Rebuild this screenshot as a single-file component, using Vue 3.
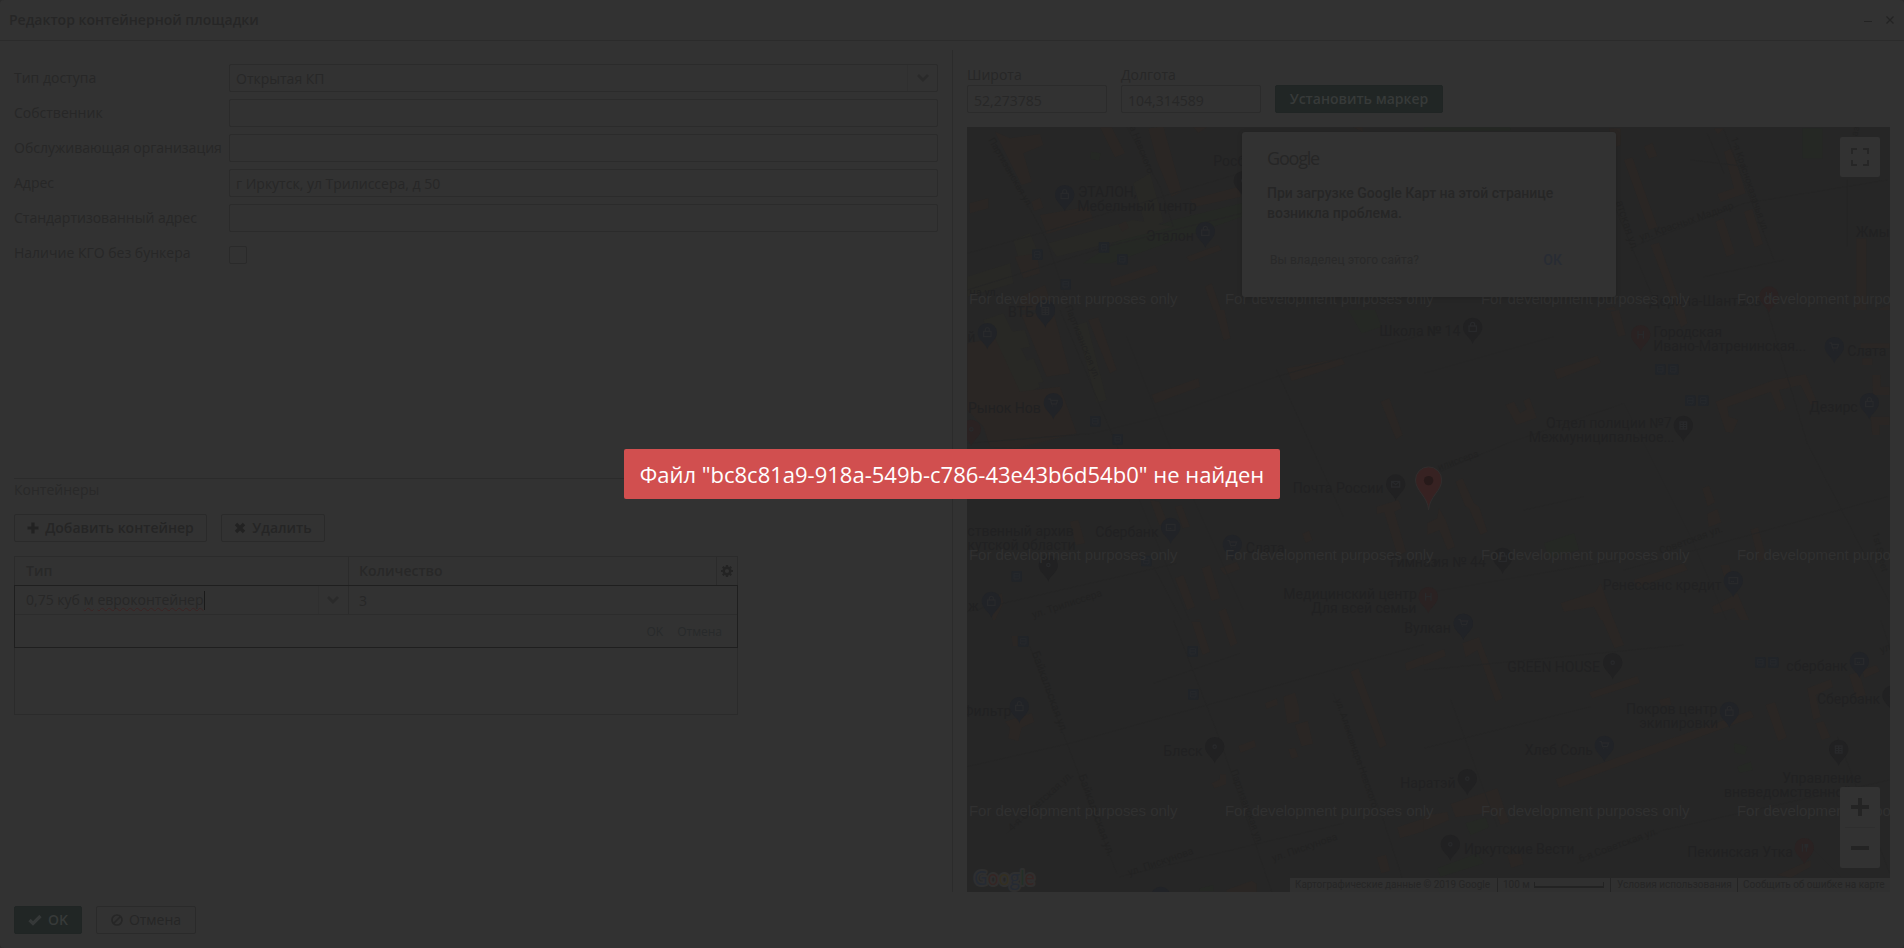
<script setup>
const fields = [
  { label: 'Тип доступа', value: 'Открытая КП', combo: true },
  { label: 'Собственник', value: '' },
  { label: 'Обслуживающая организация', value: '' },
  { label: 'Адрес', value: 'г Иркутск, ул Трилиссера, д 50' },
  { label: 'Стандартизованный адрес', value: '' },
]

// The map is made of sectors; drawing units inside one are a third of a pixel.
const sectors = [
  {
    ox: 960, oy: 0,
    green: 'M640 660L845 610V650L450 790L370 790L460 730ZM392 455l30 5-5 22-26-6Z',
    yellow: 'M520 550L570 520L610 665L560 690ZM265 730L520 660L640 680L290 770ZM22 830L150 790L160 850L22 890ZM160 720l50-20 25 60-60 15Z',
    orange: 'M105 395L150 415L240 402L250 435L190 460L215 545L185 555ZM28 610L85 595V625L30 640ZM215 605l25-12 10 30-28 10ZM240 645L385 620L400 660L260 702ZM420 382L455 382L495 460L465 472ZM565 385L610 380L665 575L635 590L590 480ZM690 600L835 560L843 590L705 620ZM680 770L775 735L785 750L690 785ZM450 840L585 795L595 815L455 860ZM735 860L755 850L790 950L770 960ZM165 770l65-10 10 60-50 15ZM180 890l75-35 30 90-110 15ZM700 382h40l-25 16ZM1180 382h28v14ZM475 675l22-12 10 20-20 12Z',
    roads: 'M105 430L260 720L420 1200M500 380L600 560L640 680M22 760L240 700L840 520M22 870L440 740L845 640',
    pins: [[314, 584, 'b', 'bag'], [736, 694, 'b', 'bag'], [256, 928, 'b', 'grid'], [850, 542, 'd', 'dot']],
    stops: [[232, 764], [432, 742], [487, 778], [317, 853]],
    labels: [[354, 590, 'ЭТАЛОН,', 42], [352, 632, 'Мебельный центр', 42], [558, 722, 'Эталон', 42], [760, 497, 'Росб', 42], [144, 952, 'ВТБ', 42], [28, 888, 'на ул.', 33]],
    streets: [[85, 420, 60, 'Партизанская ул.', 29], [508, 382, 68, 'а Невского', 29], [315, 920, 68, 'Партизанская ул.', 29]],
  },
  {
    ox: 1424, oy: 0,
    green: 'M1135 385h60v90h-60ZM0 382h260v10H0Z',
    yellow: '',
    orange: 'M600 480L625 472L700 680L675 690ZM555 385l35 0 0 50-20 8ZM660 440l25-12 15 40-25 8ZM900 455L925 445L965 580L890 605L880 582L930 565ZM870 385h30l-18 18ZM960 635l25-8 32 105-25 10ZM875 665l23-10 35 105-25 10ZM680 735L705 728L785 955L765 960ZM1297 715h30v215h-30ZM545 925l25-5 30 60-28 12ZM1365 925l32-10v35h-25Z',
    roads: 'M560 590L690 900M900 390L1050 780M640 735L960 610L1390 540M850 400l50 120M1270 540v200M800 480l170 20M840 830l240-50',
    pins: [[1035, 888, 'r', 'h']],
    stops: [],
    labels: [[1295, 711, 'Жмы', 42], [675, 918, 'Дерина-Шанталь', 42]],
    streets: [[575, 605, 72, 'атская ул.', 34], [650, 722, -19, 'ул. Красных Мадьяр', 31], [920, 415, 71, '1-я Красноказачья ул.', 29], [1300, 410, -78, 'азачья', 28]],
  },
  {
    ox: 960, oy: 310,
    green: 'M1165 0h80l20 50-60 20Z',
    yellow: 'M70 30L130 10L240 230L180 260ZM150 65l45-5 15 50-50 10ZM170 165l50-20 30 70-55 15ZM350 45l30-10 60 235-30 8Z',
    orange: 'M22 100L105 85L180 245L300 230L350 370L170 415L90 410L70 350L22 300ZM185 15L280 5L330 190L260 200ZM385 30L415 22L470 180L450 190ZM575 255L715 205L720 230L585 280ZM980 175L1145 145L1155 162L995 213ZM1262 275L1288 265L1328 375L1308 388ZM765 0h28l18 85-20 6ZM570 570l28 5 28 75-28-5ZM645 590l20-5 25 65-22 5ZM330 635l25-5 20 70-28 5ZM1250 590l65-20 10 25-22 10 35 120-25 12-40-130-22 5ZM1400 640l40-15v40l-35 5ZM1027 672l20-10 10 28-20 8ZM645 805l25-10 35 95-23 10ZM725 775l25-10 30 100-25 8ZM780 775l50-20 10 22-45 18ZM775 905l22-10 25 70h-25ZM695 935l22-8 25 33h-30ZM90 870l35-20 5 30-30 60Z',
    roads: 'M300 0L480 430L700 960M22 400L400 370L640 310M500 80L630 410L850 900M640 310L950 200L1440 60M580 770L680 960M0 910L650 760M950 180L1150 620',
    pins: [[82, 68, 'b', 'bag'], [256, 3, 'b', 'grid'], [280, 278, 'b', 'cart'], [34, 358, 'r', 'dot'], [1307, 522, 'd', 'mail'], [632, 652, 'b', 'card'], [817, 703, 'b', 'cart'], [265, 765, 'd', 'dot'], [94, 874, 'b', 'bag'], [1405, 860, 'r', 'h']],
    stops: [[406, 334], [473, 388], [559, 753], [170, 799]],
    labels: [[22, 96, 'й', 42], [24, 308, 'Рынок Нов', 42], [1258, 78, 'Школа №', 42], [998, 550, 'Почта России', 42], [22, 678, 'ственный архив', 42], [22, 720, 'кутской области', 42], [406, 682, 'Сбербанк', 42], [857, 730, 'Слата', 42], [1290, 772, 'Гимназ', 42], [970, 867, 'Медицинский центр', 42], [1054, 909, 'Для всей семьи', 42], [24, 903, 'ж', 42]],
    streets: [[220, 925, -18, 'ул. Трилиссера', 31]],
  },
  {
    ox: 1424, oy: 310,
    green: 'M360 700l90-30 15 50-90 25Z',
    yellow: '',
    orange: 'M390 180L520 137L530 158L400 208ZM245 285l25-10 18 35 20-12-10-25 18-10 22 60-60 22ZM875 275L1050 210L1145 193L1180 280L1160 285L1130 225L1065 240L1085 295L1065 305L1040 245L910 290L915 320L942 330L925 368L905 365ZM560 5l25-5 20 75-22 5ZM750 0h30l10 40-18 12ZM95 515l20-10 35 75 15 10 25 75-20 10-35-80-12-8ZM10 640l30-15 5-30 20 35 28 80-22 10-25-60-36 15ZM835 535l20-8 18 50-22 12ZM850 612l30-15 12 40-38 15ZM980 660l22-8 25 90-22 15ZM410 880L515 845L530 820L580 960H545L510 890L420 905ZM630 810L780 760L790 780L640 830ZM865 890L940 850L975 930L955 940L930 895L870 912ZM1345 195h25v35h27v25h-50ZM1310 100h87v15h-87ZM1315 145h30v20h-30ZM1340 320h57v25h-30v30h-22ZM890 765h25l8 25-22 10Z',
    roads: 'M0 505L250 400L600 280M600 780L1390 560M600 280L800 680L920 960M0 850L700 730M1030 0L1150 400L1397 880M0 190L390 80M300 600L480 560',
    pins: [[146, 52, 'd', 'bag'], [650, 74, 'r', 'h'], [1231, 110, 'b', 'cart'], [1336, 278, 'b', 'bag'], [778, 346, 'd', 'grid'], [236, 742, 'd', 'bag'], [928, 812, 'b', 'card'], [118, 940, 'b', 'cart']],
    stops: [[709, 178], [748, 178], [799, 272], [838, 272]],
    labels: [[8, 77, '№ 14', 42], [688, 81, 'Городская', 42], [688, 123, 'Ивано-Матренинская...', 42], [1270, 138, 'Слата', 42], [1156, 306, 'Дезирс', 42], [366, 354, 'Отдел полиции №7', 42], [314, 397, 'Межмуниципальное...', 42], [27, 771, 'ия № 44', 42], [536, 840, 'Ренессанс кредит', 42]],
    streets: [[45, 482, -20, 'илиссера', 29], [710, 733, -20, 'Советская ул.', 31], [1345, 670, 76, '1st Street', 28]],
  },
  {
    ox: 960, oy: 620,
    green: 'M720 805l40-10v18h-40Z',
    yellow: '',
    orange: 'M695 5h25l30 90-22 10ZM785 0h25l22 70-20 10ZM155 48h18v30h-14ZM135 305l80-25 8 25-38 18-10 40-30-8 5-32ZM1335 130L1440 90V115L1340 152ZM1172 155L1195 145L1280 375L1260 385ZM970 230l35-12 12 45 0 40-35 8ZM1005 315l38-12 16 68-34 8ZM915 250l35-14 4 18-34 12ZM835 378l48-18 5 20-46 18ZM985 388l20-4 10 26-20 6ZM755 490l25-12 0-15 18 0 0 30-35 12ZM1312 622L1440 580V620L1320 655ZM1250 712l28-8 12 48-26 8ZM800 810l75-28 15 10v24h-90Z',
    roads: 'M640 0L780 360L935 815M210 80L470 760M22 440L330 370L1440 60M140 640L340 470M480 770L1150 610M580 190l260-90M1120 220L1270 600L1340 815',
    pins: [[178, 260, 'b', 'bag'], [764, 380, 'd', 'dot'], [602, 829, 'b', 'dot']],
    stops: [[190, 64], [698, 94], [700, 223]],
    labels: [[8, 287, 'Фильтр', 42], [610, 408, 'Блеск', 42], [1333, 39, 'Вулкан', 42], [1321, 504, 'Наратэй', 42]],
    streets: [[215, 98, 70, 'Байкальская ул.', 34], [355, 467, 70, 'Байкальская ул.', 34], [155, 635, -42, '4-я Советская ул.', 31], [508, 768, -19, 'ул. Пискунова', 31], [940, 725, -19, 'ул. Пискунова', 31], [812, 452, 70, 'Партизанская ул.', 29], [1125, 240, 71, 'ул. Александра Невского', 29]],
  },
  {
    ox: 1424, oy: 620,
    green: 'M125 610l60-18 10 30-55 24ZM40 745L160 700L180 730L50 770ZM930 370l40 10-8 25-30-8ZM940 440l40-15 6 25-40 8Z',
    yellow: '',
    orange: 'M115 70L165 52L235 235L215 245L160 90L125 112ZM535 0h35l30 75-28 10ZM0 110L60 88L65 108L0 135ZM495 218L640 168L648 188L505 235ZM395 478L980 272L990 292L405 503ZM1025 255l28-8 35 105-25 12ZM1150 205L1220 178L1227 200L1175 225L1190 290L1168 300ZM1175 310l24-6 20 48-26 8ZM1275 165l30-10 20 70-28 8ZM1315 150l42-14 10 18-46 20ZM705 240l32-8 5 22-30 4ZM80 552L220 505L255 605L230 615L215 575L95 592ZM0 588L70 576L75 600L0 632ZM250 705l40-5 8 32-36 12ZM1060 765L1160 720V740L1100 773Z',
    roads: 'M0 150L780 75M460 730L720 630L1397 480M0 385L500 260M1370 0L1397 80M1240 350L1397 760M80 240l140 380M1150 670l100 100',
    pins: [[118, 10, 'b', 'cart'], [566, 128, 'd', 'dot'], [1306, 124, 'b', 'card'], [916, 274, 'b', 'bag'], [541, 376, 'b', 'cart'], [1244, 388, 'd', 'grid'], [130, 476, 'd', 'dot'], [79, 673, 'd', 'dot'], [1141, 683, 'r', 'fork'], [1404, 226, 'd', 'dot']],
    stops: [[1009, 127], [1048, 127]],
    labels: [[250, 156, 'GREEN HOUSE', 42], [1087, 153, 'сбербанк', 42], [1179, 252, 'Сбербанк', 42], [606, 283, 'Покров центр', 42], [646, 325, 'экипировки', 42], [302, 405, 'Хлеб Соль', 42], [1075, 489, 'Управление', 42], [900, 531, 'вневедомственной', 42], [120, 702, 'Иркутские Вести', 42], [790, 711, 'Пекинская Утка', 42]],
    streets: [[468, 727, -20, '6-я Советская ул.', 31], [1372, 100, -20, 'ул.', 31]],
  },
]
const glyphs = {
  bag: 'M-11 -4H11V12H-11ZM-6 -5V-9A6 6 0 0 1 6 -9V-5',
  cart: 'M-15 -11H-9L-5 4H9L13 -7H-8M-4 10h2M7 10h2',
  grid: 'M-10 -10H10V11H-10ZM-10 -3H10M-10 4H10M0 -10V11',
  mail: 'M-12 -8H12V9H-12ZL0 2L12 -8',
  card: 'M-13 -9H13V9H-13ZM-7 3h4M-2 3h4',
  h: 'M-8 -12V12M8 -12V12M-8 0H8',
  fork: 'M-6 -11V12M6 -11V12M2 -11V-2H10V-11',
  dot: 'M-5 0A5 5 0 1 0 5 0A5 5 0 1 0 -5 0',
}
const watermarks = []
for (const y of [304, 560, 816]) for (let i = 0; i < 4; i++) watermarks.push([969 + i * 256, y])
</script>

<template>
  <div class="window">
    <header class="titlebar">
      <h1>Редактор контейнерной площадки</h1>
      <div class="tools">
        <svg width="8" height="12" viewBox="0 0 8 12"><path d="M0 7.5H8" /></svg>
        <svg width="8" height="12" viewBox="0 0 8 12"><path d="M.5 2.5L7.5 9.5M7.5 2.5L.5 9.5" /></svg>
      </div>
    </header>

    <main class="body">
      <section class="left">
        <div class="form">
          <div v-for="f in fields" :key="f.label" class="row">
            <label>{{ f.label }}</label>
            <div class="input">
              <span>{{ f.value }}</span>
              <i v-if="f.combo" class="trigger">
                <svg width="14" height="10" viewBox="0 0 14 10"><path d="M2 2L7 7L12 2" /></svg>
              </i>
            </div>
          </div>
          <div class="row">
            <label>Наличие КГО без бункера</label>
            <div class="check"></div>
          </div>
        </div>

        <div class="containers">
          <div class="caption">Контейнеры</div>
          <div class="toolbar">
            <div class="btn add">
              <svg width="12" height="12" viewBox="0 0 12 12"><path d="M6 .5V11.5M.5 6H11.5" stroke-width="3.2" /></svg>
              <span>Добавить контейнер</span>
            </div>
            <div class="btn del">
              <svg width="12" height="12" viewBox="0 0 12 12"><path d="M2 2L10 10M10 2L2 10" stroke-width="3.4" /></svg>
              <span>Удалить</span>
            </div>
          </div>
          <div class="grid">
            <div class="ghead">
              <div class="c1">Тип</div>
              <div class="c2">Количество</div>
              <div class="c3">
                <svg width="12" height="12" viewBox="-6 -6 12 12">
                  <circle r="3.3" stroke-width="2.4" />
                  <path d="M0 -6V-4M0 6V4M-6 0H-4M6 0H4M-4.2 -4.2L-3 -3M4.2 4.2L3 3M-4.2 4.2L-3 3M4.2 -4.2L3 -3" stroke-width="2.2" />
                </svg>
              </div>
            </div>
            <div class="editor">
              <div class="erow">
                <div class="e1">
                  <span class="val">0,75 куб <u>м</u> <u>евроконтейнер</u></span><b class="caret"></b>
                  <i class="trigger">
                    <svg width="14" height="10" viewBox="0 0 14 10"><path d="M2 2L7 7L12 2" /></svg>
                  </i>
                </div>
                <div class="e2">3</div>
              </div>
              <div class="eact"><span>OK</span><span>Отмена</span></div>
            </div>
          </div>
        </div>
      </section>

      <section class="right">
        <div class="coords">
          <div class="coord"><label>Широта</label><div class="input"><span>52,273785</span></div></div>
          <div class="coord"><label>Долгота</label><div class="input"><span>104,314589</span></div></div>
          <div class="btn primary marker"><span>Установить маркер</span></div>
        </div>

        <div class="map">
          <svg class="canvas" width="923" height="765" viewBox="967 127 923 765">
            <defs>
              <clipPath v-for="(s, i) in sectors" :id="'sector' + i" :key="i">
                <rect :x="0" :y="i < 2 ? 380 : 0" :width="s.ox === 960 ? 1392 : 1398" :height="i < 2 ? 550 : i < 4 ? 930 : 820" />
              </clipPath>
            </defs>
            <g v-for="(s, i) in sectors" :key="i" :transform="`translate(${s.ox} ${s.oy}) scale(.33333)`">
              <g :clip-path="`url(#sector${i})`">
                <path class="green" :d="s.green" />
                <path class="yellow" :d="s.yellow" />
                <path class="orange" :d="s.orange" />
                <path class="road" :d="s.roads" />
              </g>
            </g>
            <g v-for="(s, i) in sectors" :key="'l' + i" :transform="`translate(${s.ox} ${s.oy})`">
              <g v-for="(p, k) in s.stops" :key="'s' + k" class="stop" :transform="`translate(${p[0] / 3} ${p[1] / 3}) scale(.33333)`">
                <rect x="-16" y="-16" width="32" height="32" rx="3" />
                <path d="M-8 -9H8V8H-8ZM-8 -1H8M-5 11h2M3 11h2" />
              </g>
              <g v-for="(p, k) in s.pins" :key="'p' + k" class="pin" :class="p[2]" :transform="`translate(${p[0] / 3} ${p[1] / 3}) scale(.33333)`">
                <path class="shape" d="M0 50C-3 34 -29 22 -29 0A29 29 0 1 1 29 0C29 22 3 34 0 50Z" />
                <path class="glyph" :d="glyphs[p[3]]" />
              </g>
              <text v-for="(t, k) in s.labels" :key="'t' + k" :x="t[0] / 3" :y="t[1] / 3" :font-size="t[3] / 3">{{ t[2] }}</text>
              <text v-for="(t, k) in s.streets" :key="'r' + k" class="street" :font-size="t[4] / 3" :transform="`translate(${t[0] / 3} ${t[1] / 3}) rotate(${t[2]})`">{{ t[3] }}</text>
            </g>
            <text v-for="(w, i) in watermarks" :key="'w' + i" class="watermark" :x="w[0]" :y="w[1]" textLength="208.5">For development purposes only</text>
            <g class="marker-pin">
              <path d="M1428.6 510C1427.6 496 1415.5 491 1415.5 480A13.1 13.1 0 1 1 1441.7 480C1441.7 491 1429.6 496 1428.6 510Z" />
              <circle cx="1428.6" cy="480.6" r="4.7" />
            </g>
            <text class="brand" x="974" y="885" textLength="61" lengthAdjust="spacingAndGlyphs"><tspan class="g1">G</tspan><tspan class="g2">o</tspan><tspan class="g3">o</tspan><tspan class="g1">g</tspan><tspan class="g4">l</tspan><tspan class="g2">e</tspan></text>
          </svg>

          <div class="dialog">
            <div class="logo">Google</div>
            <p>При загрузке Google Карт на этой странице<br />возникла проблема.</p>
            <div class="dact"><span class="owner">Вы владелец этого сайта?</span><span class="ok">ОК</span></div>
          </div>

          <div class="full">
            <svg width="18" height="18" viewBox="0 0 18 18"><path d="M1 6V1H6M12 1H17V6M17 12V17H12M6 17H1V12" /></svg>
          </div>
          <div class="zoom">
            <svg width="18" height="18" viewBox="0 0 18 18"><path d="M9 0V18M0 9H18" /></svg>
            <hr />
            <svg width="18" height="18" viewBox="0 0 18 18"><path d="M0 9H18" /></svg>
          </div>
          <div class="credits">
            <span class="k1">Картографические данные © 2019 Google</span>
            <span class="k2">100 м<i class="scale"></i></span>
            <span class="k3">Условия использования</span>
            <span class="k4">Сообщить об ошибке на карте</span>
          </div>
        </div>
      </section>
    </main>

    <footer class="footer">
      <div class="btn primary okbtn">
        <svg width="14" height="12" viewBox="0 0 14 12"><path d="M1.5 6L5 9.5L12.5 2" stroke-width="3.2" /></svg>
        <span>OK</span>
      </div>
      <div class="btn cancel">
        <svg width="12" height="12" viewBox="0 0 12 12"><circle cx="6" cy="6" r="5" stroke-width="1.7" /><path d="M2.5 9.5L9.5 2.5" stroke-width="1.7" /></svg>
        <span>Отмена</span>
      </div>
    </footer>

    <div class="toast">Файл "bc8c81a9-918a-549b-c786-43e43b6d54b0" не найден</div>
  </div>
</template>

<style>
body { background: #2b2b2b; overflow: hidden; }
</style>

<style scoped>
* { box-sizing: border-box; }
.window {
  position: relative;
  width: 1904px;
  height: 948px;
  display: flex;
  flex-direction: column;
  background: #323232;
  border-radius: 4px;
  overflow: hidden;
  font: 400 14px/20px "Open Sans", "Noto Sans", sans-serif;
  color: #272727;
  white-space: nowrap;
}
svg { display: block; fill: none; flex: none; }
.titlebar {
  height: 41px;
  border-bottom: 1px solid #2b2b2b;
  display: flex;
  align-items: center;
  justify-content: space-between;
  padding: 0 10px 0 9px;
}
h1 { margin: 0; font-size: 14px; font-weight: 600; line-height: 40px; color: #262626; }
.tools { display: flex; gap: 14px; }
.tools svg { stroke: #232323; stroke-width: 1.2; }
.body { height: 851px; display: flex; padding-top: 9px; }
.left {
  width: 953px;
  height: 842px;
  padding: 14px 14px 0;
  border-right: 1px solid #2b2b2b;
}
.form { height: 414px; display: flex; flex-direction: column; gap: 7px; }
.row { display: flex; height: 28px; }
.row label { width: 215px; line-height: 28px; }
.input {
  flex: 1;
  height: 28px;
  display: flex;
  justify-content: space-between;
  border: 1px solid #2b2b2b;
  border-radius: 2px;
  padding-left: 6px;
  line-height: 28px;
}
.trigger {
  width: 30px;
  border-left: 1px solid #2f2f2f;
  display: flex;
  align-items: center;
  justify-content: center;
}
.trigger svg { stroke: #2a2a2a; stroke-width: 2.8; }
.check { width: 18px; height: 18px; margin-top: 7px; border: 1px solid #2a2a2a; border-radius: 2px; }
.containers { border-top: 1px solid #2b2b2b; }
.caption { height: 35px; line-height: 22px; color: #292929; }
.toolbar { display: flex; gap: 14px; }
.btn {
  height: 28px;
  display: flex;
  align-items: center;
  justify-content: center;
  border: 1px solid #2a2a2a;
  border-radius: 2px;
  font-weight: 600;
}
.btn svg { stroke: #222; margin-right: 6px; }
.add { width: 193px; color: #252525; }
.del { width: 104px; color: #252525; }
.primary { background: #212625; border-color: #202524; color: #373a39; font-weight: 600; }
.primary svg { stroke: #353838; }
.grid { width: 724px; height: 159px; margin-top: 14px; border: 1px solid #2b2b2b; }
.ghead { height: 28px; display: flex; font-weight: 600; line-height: 28px; color: #282828; }
.c1 { width: 334px; padding-left: 11px; border-right: 1px solid #2b2b2b; }
.c2 { width: 368px; padding-left: 10px; border-right: 1px solid #2b2b2b; }
.c3 { flex: 1; display: flex; align-items: center; justify-content: center; }
.c3 svg { stroke: #232323; }
.editor { width: 724px; height: 63px; margin-left: -1px; border: 1px solid #1f1f1f; }
.erow { height: 29px; display: flex; border-bottom: 1px solid #2c2c2c; line-height: 30px; }
.e1 { width: 334px; display: flex; align-items: center; padding-left: 11px; border-right: 1px solid #2b2b2b; }
.e1 u { text-decoration: underline wavy #3a2222 1px; text-underline-offset: 2px; text-decoration-skip-ink: none; }
.caret { width: 1px; height: 19px; background: #1a1a1a; margin: 0 auto 0 1px; }
.e1 .trigger { height: 28px; padding-right: 2px; }
.e2 { padding-left: 10px; }
.eact { display: flex; justify-content: flex-end; gap: 14px; padding-right: 15px; font-size: 12px; line-height: 33px; color: #282a2b; }
.right { width: 951px; padding: 15px 0 0 14px; }
.coords { height: 62px; display: flex; align-items: flex-start; gap: 14px; }
.coord { width: 140px; }
.coord label { display: block; height: 20px; }
.coord .input { line-height: 29px; }
.marker { width: 168px; margin-top: 20px; }
.map { position: relative; width: 923px; height: 765px; background: #262626; overflow: hidden; }
.canvas text { font-family: Roboto, sans-serif; font-weight: 400; fill: #212122; }
.canvas .street { fill: #222; }
.green { fill: #252824; }
.yellow { fill: #282825; }
.orange { fill: #2a2624; }
.road { stroke: #252525; stroke-width: 3; }
.stop rect { fill: #212428; }
.stop path { stroke: #27292c; stroke-width: 3; }
.shape { fill: #212122; }
.b .shape { fill: #212327; }
.r .shape { fill: #2a2222; }
.glyph { stroke: #28292b; stroke-width: 4; }
.canvas .watermark { font: 400 15px "Liberation Sans", Arial, sans-serif; fill: #303030; }
.marker-pin path { fill: #372222; stroke: #302e2e; stroke-width: 1; }
.marker-pin circle { fill: #271a1a; }
.canvas .brand { font: 500 20px "Open Sans", Lato, sans-serif; stroke: #2f2f2f; stroke-width: 4px; paint-order: stroke; stroke-linejoin: round; }
.canvas .g1 { fill: #252a33; }
.canvas .g2 { fill: #362523; }
.canvas .g3 { fill: #352f20; }
.canvas .g4 { fill: #223025; }
.dialog {
  position: absolute;
  left: 275px;
  top: 5px;
  width: 374px;
  height: 165px;
  padding: 13px 25px;
  border-radius: 3px;
  background: #323232;
  box-shadow: 0 1px 5px rgba(0, 0, 0, .15);
  font-family: Roboto, sans-serif;
  font-weight: 400;
}
.logo { height: 30px; font: 400 18px/26px "Open Sans", Lato, sans-serif; letter-spacing: -1.2px; color: #262626; }
.dialog p { margin: 8px 0 0; font-size: 14px; font-weight: 500; line-height: 20px; color: #262626; }
.dact { display: flex; justify-content: space-between; margin-top: 27px; padding: 0 29px 0 3px; }
.owner { font-size: 12px; color: #292929; letter-spacing: .05px; }
.ok { font-size: 14px; font-weight: 500; color: #282c34; }
.full, .zoom { position: absolute; left: 873px; width: 40px; background: #323232; border-radius: 2px; display: flex; flex-direction: column; align-items: center; }
.full { top: 10px; height: 40px; justify-content: center; }
.full svg { stroke: #262626; stroke-width: 2; }
.zoom { top: 660px; height: 81px; padding: 11px 0; justify-content: space-between; }
.zoom svg { stroke: #242424; stroke-width: 4; }
.zoom hr { width: 30px; height: 1px; margin: 0; border: 0; background: #2e2e2e; }
.credits { position: absolute; right: 0; bottom: 0; height: 14px; display: flex; background: #303030; font: 400 10px/14px Roboto, sans-serif; color: #252525; }
.credits span { padding-left: 5px; border-left: 1px solid #242424; }
.credits .k1 { width: 207px; border: 0; letter-spacing: -.03px; }
.credits .k2 { width: 113px; display: flex; }
.credits .k3 { width: 127px; padding-left: 6px; }
.credits .k4 { width: 153px; }
.scale { width: 70px; height: 6px; margin: 4px 0 0 4px; border: 2px solid #232323; border-width: 0 1px 2px; }
.footer { height: 56px; padding: 14px; display: flex; gap: 14px; }
.okbtn { width: 68px; }
.cancel { width: 100px; font-weight: 400; color: #262626; }
.cancel svg { stroke: #262626; }
.toast {
  position: absolute;
  left: 624px;
  top: 449px;
  width: 656px;
  height: 50px;
  border-radius: 2px;
  background: #d14f4f;
  color: #fff;
  text-align: center;
  font-size: 22px;
  font-weight: 400;
  line-height: 51px;
}
</style>
